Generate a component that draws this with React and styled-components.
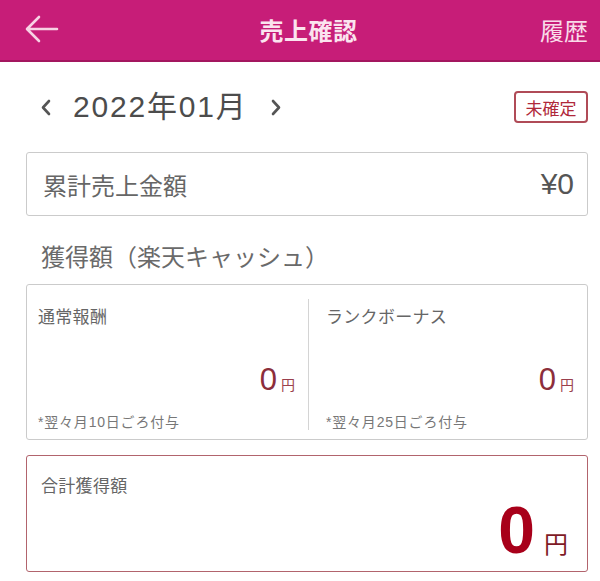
import React from "react";
import styled, { createGlobalStyle } from "styled-components";

const Global = createGlobalStyle`
  html, body { margin: 0; padding: 0; background: #fff; }
  body { font-family: "Liberation Sans", "Noto Sans CJK JP", sans-serif; }
  * { box-sizing: border-box; }
`;

const Page = styled.div`
  width: 600px;
  height: 581px;
  overflow: hidden;
  background: #fff;
`;

const Header = styled.header`
  height: 62px;
  background: #c71d78;
  border-bottom: 2px solid #a3165f;
  display: grid;
  grid-template-columns: 1fr auto 1fr;
  align-items: center;
  padding: 0 12px 2px 25px;
`;

const BackButton = styled.div`
  display: flex;
  align-items: center;
  height: 28px;
`;

const Title = styled.h1`
  margin: 0 0 0 4px;
  font-size: 24px;
  font-weight: 700;
  color: #fbe4ef;
  letter-spacing: 0.5px;
`;

const HeaderLink = styled.div`
  justify-self: end;
  font-size: 24px;
  color: #f9dbe9;
`;

const Content = styled.main`
  padding: 0 12px 0 26px;
`;

const DateRow = styled.div`
  display: flex;
  align-items: center;
  height: 32px;
  margin-top: 29px;
  margin-bottom: 29px;
`;

const MonthNav = styled.div`
  display: flex;
  align-items: center;
  flex: 1;
  padding-left: 14px;
`;

const Month = styled.span`
  font-size: 30px;
  color: #4c4c4c;
  letter-spacing: 1.8px;
  margin: 0 22px 0 21px;
  line-height: 32px;
`;

const Badge = styled.span`
  width: 74px;
  height: 32px;
  border: 2px solid #b04b57;
  border-radius: 4px;
  display: flex;
  align-items: center;
  justify-content: center;
  font-size: 17px;
  color: #b0283a;
`;

const Card = styled.section`
  border: 1.5px solid ${(p) => (p.$accent ? "#b2646d" : "#cbcbcb")};
  border-radius: 3px;
  background: #fff;
`;

const TotalRow = styled(Card)`
  height: 64px;
  display: flex;
  align-items: center;
  justify-content: space-between;
  padding: 0 13px 0 16px;
`;

const TotalLabel = styled.span`
  font-size: 24px;
  color: #666;
`;

const TotalValue = styled.span`
  font-size: 30px;
  color: #555;
`;

const SectionTitle = styled.h2`
  margin: 27px 0 11px 15px;
  font-size: 24px;
  line-height: 30px;
  font-weight: 400;
  color: #6a6a6a;
`;

const SplitCard = styled(Card)`
  height: 156px;
  display: grid;
  grid-template-columns: 281px 1px 1fr;
  padding: 14px 0;
`;

const Divider = styled.div`
  background: #d4d4d4;
`;

const Cell = styled.div`
  display: flex;
  flex-direction: column;
  padding: 9px 13px 0 ${(p) => p.$padLeft}px;
`;

const CellLabel = styled.div`
  font-size: 17px;
  line-height: 20px;
  color: #666;
  letter-spacing: 0.3px;
`;

const Amount = styled.div`
  display: flex;
  justify-content: flex-end;
  align-items: baseline;
  margin-top: ${(p) => p.$mt}px;
  line-height: ${(p) => p.$lh}px;
`;

const Num = styled.span`
  font-size: ${(p) => p.$size}px;
  font-weight: ${(p) => (p.$bold ? 700 : 400)};
  color: ${(p) => p.$color};
`;

const Yen = styled.span`
  font-size: ${(p) => p.$size}px;
  color: ${(p) => p.$color};
  margin-left: ${(p) => p.$gap}px;
`;

const Note = styled.div`
  margin-top: 12px;
  font-size: 14px;
  line-height: 16px;
  color: #777;
  letter-spacing: 0.8px;
`;

const GrandCard = styled(Card)`
  margin-top: 15px;
  height: 117px;
  padding: 21px 19px 0 14px;
`;

const Chevron = ({ dir }) => (
  <svg width="12" height="17" viewBox="0 0 12 17">
    <path
      d={dir === "left" ? "M9 2 L3 8.5 L9 15" : "M3 2 L9 8.5 L3 15"}
      fill="none"
      stroke="#555"
      strokeWidth="2.6"
      strokeLinecap="round"
      strokeLinejoin="round"
    />
  </svg>
);

export default function App() {
  return (
    <Page>
      <Global />
      <Header>
        <BackButton>
          <svg width="34" height="28" viewBox="0 0 34 28">
            <path
              d="M32 14 H3 M14 2 L2 14 L14 26"
              fill="none"
              stroke="#f7d2e4"
              strokeWidth="2.6"
              strokeLinecap="round"
              strokeLinejoin="round"
            />
          </svg>
        </BackButton>
        <Title>売上確認</Title>
        <HeaderLink>履歴</HeaderLink>
      </Header>
      <Content>
        <DateRow>
          <MonthNav>
            <Chevron dir="left" />
            <Month>2022年01月</Month>
            <Chevron dir="right" />
          </MonthNav>
          <Badge>未確定</Badge>
        </DateRow>
        <TotalRow>
          <TotalLabel>累計売上金額</TotalLabel>
          <TotalValue>¥0</TotalValue>
        </TotalRow>
        <SectionTitle>獲得額（楽天キャッシュ）</SectionTitle>
        <SplitCard>
          <Cell $padLeft={11}>
            <CellLabel>通常報酬</CellLabel>
            <Amount $mt={35} $lh={34}>
              <Num $size={31} $color="#8c2e3b">0</Num>
              <Yen $size={14} $color="#9a3f4d" $gap={4}>円</Yen>
            </Amount>
            <Note>*翌々月10日ごろ付与</Note>
          </Cell>
          <Divider />
          <Cell $padLeft={17}>
            <CellLabel>ランクボーナス</CellLabel>
            <Amount $mt={35} $lh={34}>
              <Num $size={31} $color="#8c2e3b">0</Num>
              <Yen $size={14} $color="#9a3f4d" $gap={4}>円</Yen>
            </Amount>
            <Note>*翌々月25日ごろ付与</Note>
          </Cell>
        </SplitCard>
        <GrandCard $accent>
          <CellLabel>合計獲得額</CellLabel>
          <Amount $mt={0} $lh={66}>
            <Num $size={66} $bold $color="#a8001a">0</Num>
            <Yen $size={24} $color="#7e1a26" $gap={9}>円</Yen>
          </Amount>
        </GrandCard>
      </Content>
    </Page>
  );
}
